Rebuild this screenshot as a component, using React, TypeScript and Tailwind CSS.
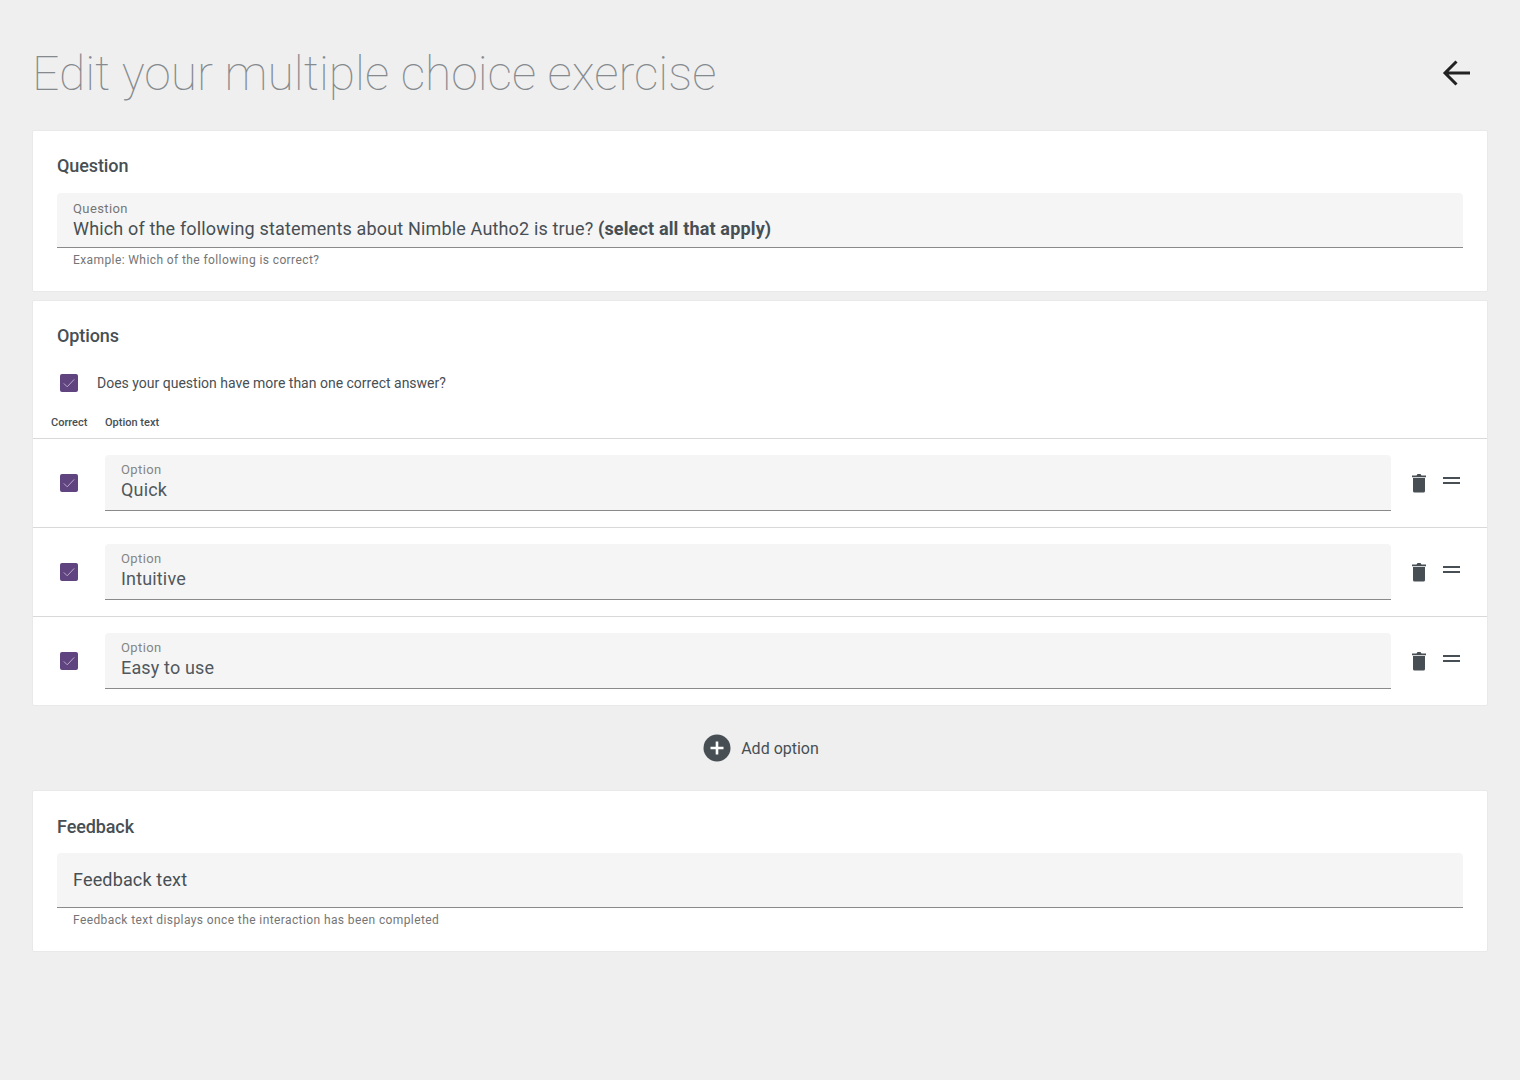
import React from "react";

const Check = () => (
  <div className="flex h-[18px] w-[18px] items-center justify-center rounded-[2px] bg-[#5f4480]">
    <svg width="18" height="18" viewBox="0 0 18 18" fill="none">
      <path d="M3.8 9.4l3.4 3.4 7-7.4" stroke="#b9abc9" strokeWidth="1" />
    </svg>
  </div>
);

const Field = ({ label, children, short }: { label: string; children: React.ReactNode; short?: boolean }) => (
  <div className={`rounded-t-[4px] border-b border-[#8a8a8a] bg-[#f5f5f5] px-4 ${short ? "h-[55px] pt-[8px]" : "h-14 pt-[7px]"}`}>
    <div className={`text-[13px] leading-[16px] tracking-[0.4px] ${short ? "text-[#757575]" : "text-[#858585]"}`}>{label}</div>
    <div className={`text-[18px] leading-[24px] tracking-[0.16px] ${short ? "text-[#474f54]" : "text-[#51585d]"}`}>{children}</div>
  </div>
);

const Row = ({ value, last }: { value: string; last?: boolean }) => (
  <div className={`flex h-[89px] items-start ${last ? "" : "border-b border-[#d9d9d9]"}`}>
    <div className="flex w-[72px] shrink-0 justify-center pt-[35px]">
      <Check />
    </div>
    <div className="w-[1286px] shrink-0 pt-4">
      <Field label="Option">{value}</Field>
    </div>
    <div className="flex items-start pt-[34px]">
      <svg className="ml-[19px]" width="18" height="20" viewBox="0 0 18 20" fill="#474f54">
        <path d="M2 2.500h4.500L7.500 1h3l1 1.500H16v1.700H2z" />
        <path d="M3 5h12v13a1.500 1.500 0 0 1-1.500 1.500h-9A1.500 1.500 0 0 1 3 18z" />
      </svg>
      <svg className="ml-[15px] mt-[3px]" width="18" height="10" viewBox="0 0 18 10" fill="#474f54">
        <rect x="0" y="1" width="17" height="2" />
        <rect x="0" y="6" width="17" height="2" />
      </svg>
    </div>
  </div>
);

const Card = ({ children, className = "" }: { children: React.ReactNode; className?: string }) => (
  <section className={`rounded-[2px] border border-[#e9e9e9] bg-white ${className}`}>{children}</section>
);

export default function App() {
  return (
    <div className="min-h-[1080px] bg-[#efefef] px-8 font-['Roboto',sans-serif]">
      <header className="flex h-[130px] items-start justify-between">
        <h1 className="pt-[42px] text-[48px] font-thin leading-[64px] text-[#858a8e]">
          Edit your multiple choice exercise
        </h1>
        <svg className="mr-[13px] mt-[55px]" width="36" height="36" viewBox="0 0 36 36" fill="none">
          <path d="M6 18h25M17.500 6.500L6 18l11.500 11.500" stroke="#222" strokeWidth="3" />
        </svg>
      </header>

      <Card className="h-[162px] px-6">
        <h2 className="pt-[23px] text-[18px] font-medium leading-[24px] tracking-[-0.1px] text-[#474f54]">Question</h2>
        <div className="mt-[15px]">
          <Field label="Question" short>
            Which of the following statements about Nimble Autho2 is true? <strong className="font-bold">(select all that apply)</strong>
          </Field>
        </div>
        <p className="px-4 pt-[4px] text-xs leading-[16px] tracking-[0.4px] text-[#757575]">
          Example: Which of the following is correct?
        </p>
      </Card>

      <Card className="mt-2 h-[406px]">
        <h2 className="px-6 pt-[23px] text-[18px] font-medium leading-[24px] tracking-[-0.1px] text-[#474f54]">Options</h2>
        <div className="flex items-center pl-[27px] pt-[25px]">
          <Check />
          <span className="ml-[19px] text-sm leading-[20px] text-[#474f54]">
            Does your question have more than one correct answer?
          </span>
        </div>
        <div className="flex h-[46px] items-center border-b border-[#d9d9d9] pt-[13px] text-[11px] font-medium leading-none text-[#474f54]">
          <span className="ml-[18px] w-[54px]">Correct</span>
          <span>Option text</span>
        </div>
        <Row value="Quick" />
        <Row value="Intuitive" />
        <Row value="Easy to use" last />
      </Card>

      <div className="flex h-[84px] items-center justify-center pl-[2px]">
        <button className="flex items-center gap-[10px]">
          <svg width="28" height="28" viewBox="0 0 28 28">
            <circle cx="14" cy="14" r="13.500" fill="#474f54" />
            <path d="M14 7.500v13M7.500 14h13" stroke="#fff" strokeWidth="2.600" />
          </svg>
          <span className="pt-[2px] text-base text-[#474f54]">Add option</span>
        </button>
      </div>

      <Card className="h-[162px] px-6">
        <h2 className="pt-[24px] text-[18px] font-medium leading-[24px] tracking-[-0.1px] text-[#474f54]">Feedback</h2>
        <div className="mt-[14px] flex h-[55px] items-center rounded-t-[4px] border-b border-[#8a8a8a] bg-[#f5f5f5] px-4 pb-[2px] text-[18px] tracking-[0.16px] text-[#474f54]">
          Feedback text
        </div>
        <p className="px-4 pt-[4px] text-xs leading-[16px] tracking-[0.4px] text-[#757575]">
          Feedback text displays once the interaction has been completed
        </p>
      </Card>
    </div>
  );
}
